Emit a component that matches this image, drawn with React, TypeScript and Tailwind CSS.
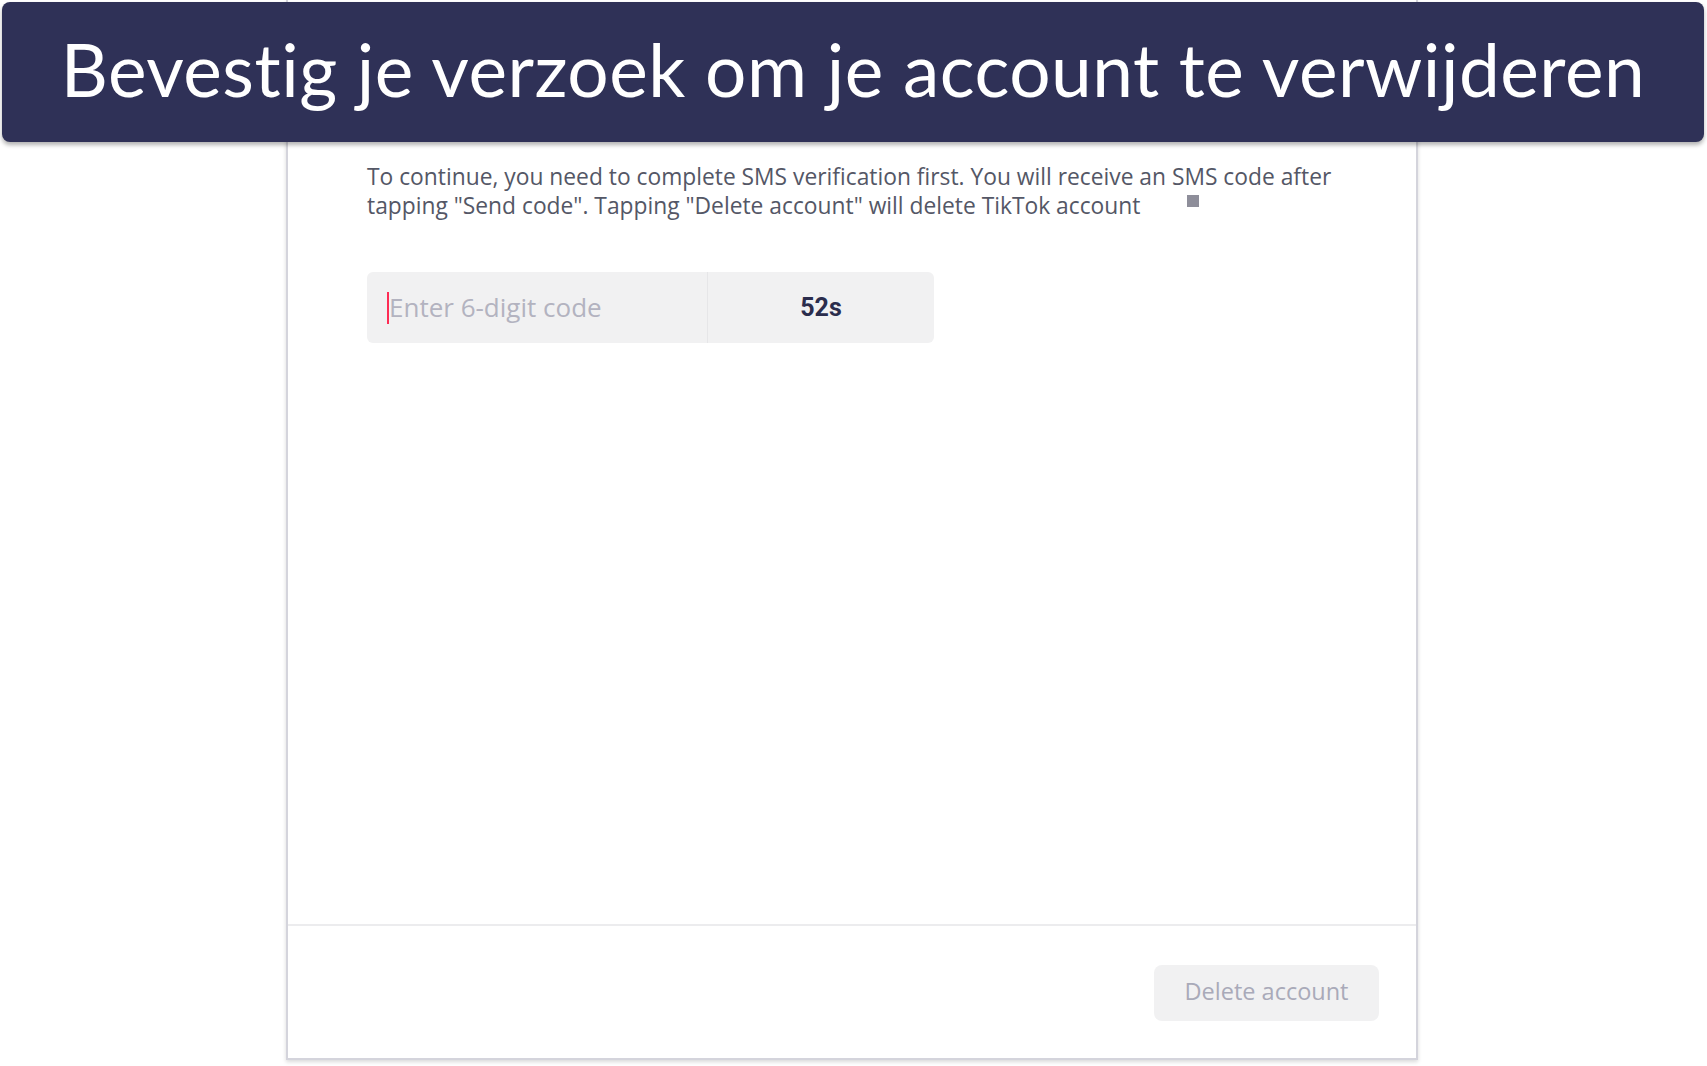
import React from "react";

const App = () => {
  return (
    <div className="relative w-full h-[1066px] bg-white overflow-hidden">
      {/* verification card, top sits under the title banner */}
      <div className="ml-[286px] w-[1132px] h-[1060px] flex flex-col bg-white border-x-2 border-b-2 border-[#d4d4dc] shadow-[0_2px_4px_rgba(0,0,0,0.15)]">
        <div className="flex-1 pl-[79px] pt-[162px]">
          <p className="relative w-[990px] text-[22.8px] leading-[29px] text-[#545766] font-['Open_Sans',sans-serif]">
            To continue, you need to complete SMS verification first. You will receive an SMS code after tapping
            "Send code". Tapping "Delete account" will delete TikTok account
            <span className="absolute left-[820px] top-[33px] w-3 h-3 bg-[#8e8e9a]" />
          </p>
          <div className="mt-[52px] flex w-[567px] h-[71px] rounded-md bg-[#f1f1f2] font-['Open_Sans',sans-serif]">
            <div className="w-[341px] flex items-center pl-5 border-r border-[#e6e6e8]">
              <span className="w-[2px] h-8 bg-[#fe2c55]" />
              <span className="text-[26px] text-[#b3b3c0]">Enter 6-digit code</span>
            </div>
            <div className="flex-1 flex items-center justify-center text-[25px] font-bold text-[#2b2d4d] font-['Roboto',sans-serif]">
              52s
            </div>
          </div>
        </div>
        <div className="h-[2px] bg-[#ececee]" />
        <div className="h-[132px] flex justify-end items-start pt-[39px] pr-[37px]">
          <button className="w-[225px] h-[56px] rounded-lg bg-[#f1f1f2] text-[23.5px] font-medium text-[#a9aab9] font-['Open_Sans',sans-serif] pb-[2px]">
            Delete account
          </button>
        </div>
      </div>

      <div className="absolute top-[2px] left-[2px] right-[3px] h-[140px] rounded-lg bg-[#2f3157] shadow-[0_3px_4px_rgba(0,0,0,0.3)] flex items-center justify-center">
        <h1 className="text-white text-[73px] font-['Lato',sans-serif] tracking-[0.5px] pb-1">
          Bevestig je verzoek om je account te verwijderen
        </h1>
      </div>
    </div>
  );
};

export default App;
